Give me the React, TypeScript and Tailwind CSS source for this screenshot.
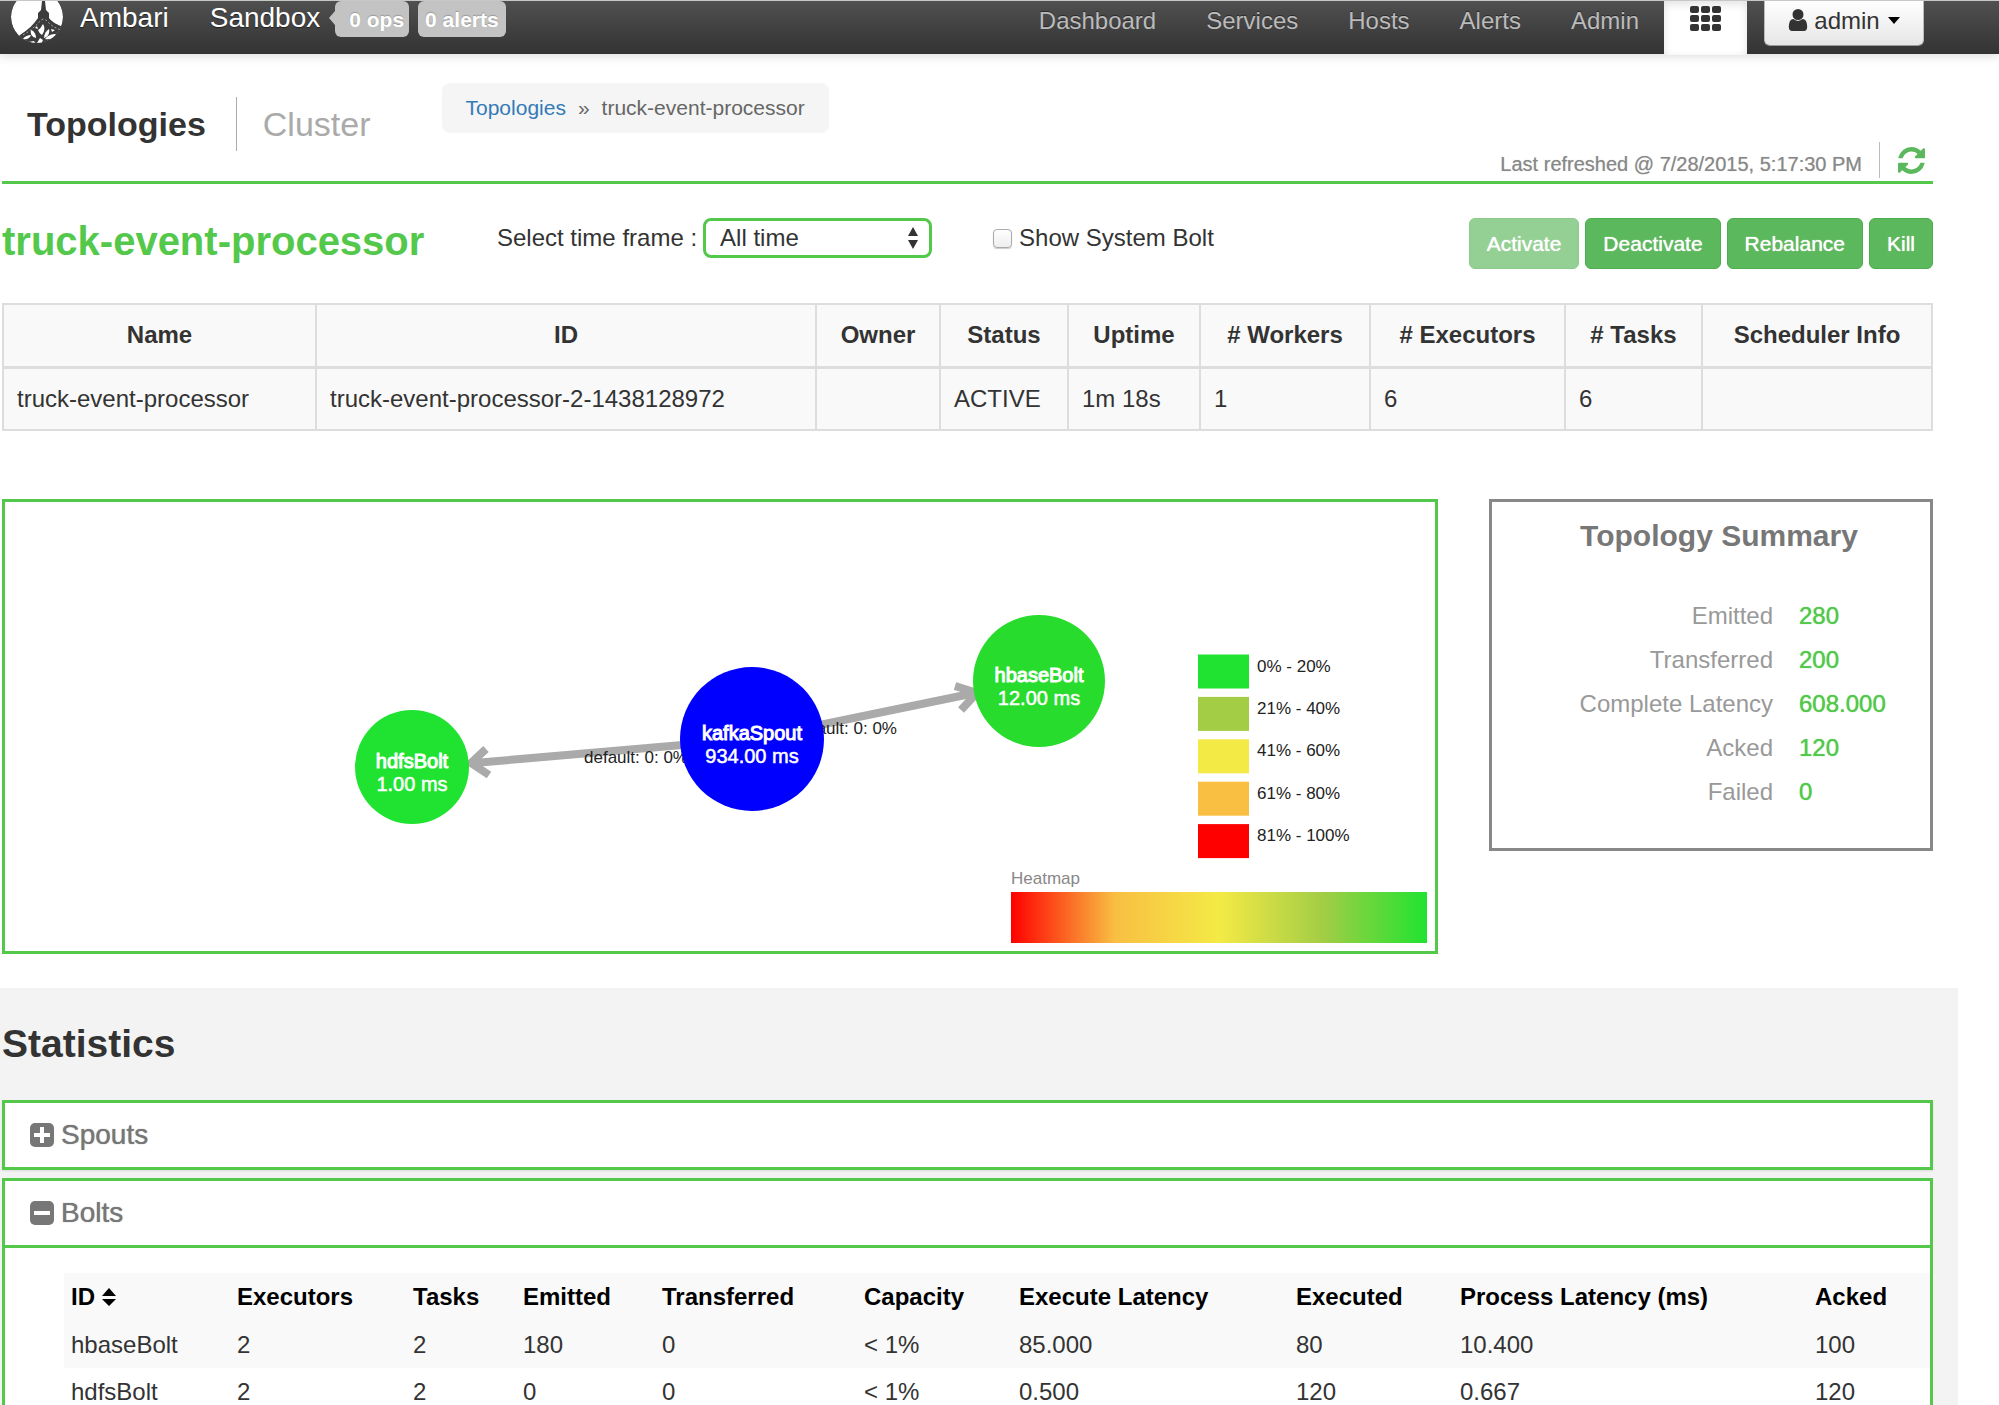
import type { ReactNode } from "react";

const GREEN = "#20e331";

const navLinks = ["Dashboard", "Services", "Hosts", "Alerts", "Admin"];

const topologyColumns: { label: string; value: string; width: string }[] = [
  { label: "Name", value: "truck-event-processor", width: "w-[313px]" },
  { label: "ID", value: "truck-event-processor-2-1438128972", width: "w-[500px]" },
  { label: "Owner", value: "", width: "w-[124px]" },
  { label: "Status", value: "ACTIVE", width: "w-[128px]" },
  { label: "Uptime", value: "1m 18s", width: "w-[132px]" },
  { label: "# Workers", value: "1", width: "w-[170px]" },
  { label: "# Executors", value: "6", width: "w-[195px]" },
  { label: "# Tasks", value: "6", width: "w-[137px]" },
  { label: "Scheduler Info", value: "", width: "w-auto" },
];

const summary = [
  ["Emitted", "280"],
  ["Transferred", "200"],
  ["Complete Latency", "608.000"],
  ["Acked", "120"],
  ["Failed", "0"],
];

const boltColumns: { label: string; width: string }[] = [
  { label: "ID", width: "w-[166px]" },
  { label: "Executors", width: "w-[176px]" },
  { label: "Tasks", width: "w-[110px]" },
  { label: "Emitted", width: "w-[139px]" },
  { label: "Transferred", width: "w-[202px]" },
  { label: "Capacity", width: "w-[155px]" },
  { label: "Execute Latency", width: "w-[277px]" },
  { label: "Executed", width: "w-[164px]" },
  { label: "Process Latency (ms)", width: "w-[355px]" },
  { label: "Acked", width: "w-auto" },
];

const boltRows = [
  ["hbaseBolt", "2", "2", "180", "0", "< 1%", "85.000", "80", "10.400", "100"],
  ["hdfsBolt", "2", "2", "0", "0", "< 1%", "0.500", "120", "0.667", "120"],
];

const legend = [
  { color: GREEN, label: "0% - 20%" },
  { color: "#a3cd45", label: "21% - 40%" },
  { color: "#f4ea45", label: "41% - 60%" },
  { color: "#f8bf43", label: "61% - 80%" },
  { color: "#ff0000", label: "81% - 100%" },
];

const nodes = [
  { name: "hdfsBolt", time: "1.00 ms", x: 412, y: 768, r: 57, fill: GREEN },
  { name: "kafkaSpout", time: "934.00 ms", x: 752, y: 740, r: 72, fill: "#0000ff" },
  { name: "hbaseBolt", time: "12.00 ms", x: 1039, y: 682, r: 66, fill: "#27dc2c" },
];

function Logo() {
  return (
    <svg viewBox="0 0 52 43" className="h-[43px] w-[52px]" aria-hidden="true">
      <defs>
        <clipPath id="logo-disc">
          <circle cx="26" cy="16" r="26" />
        </clipPath>
      </defs>
      <g clipPath="url(#logo-disc)">
        <circle cx="26" cy="16" r="26" fill="#fff" />
        <path
          d="M31 0h3l1 9 3 3v5c4 5 9 7 15 9v20H7V36l2-2c8-5 14-11 18-17v-5l3-3z"
          fill="#3c3c3c"
        />
        <path
          d="M12 34c7-4 13-9 18-15 1-1 4-1 5 0 4 5 9 8 15 10"
          fill="none"
          stroke="#aaa"
          strokeWidth="1"
          strokeDasharray="2 2"
        />
        <g fill="#fff">
          <path d="M12 38c2-3 5-4 8-4-1 3-4 5-8 4z" />
          <path d="M20 29c3 1 5 4 5 8-4-1-6-4-5-8z" />
          <path d="M27 29c3-2 3-3 5-6 2 3 2 7-1 11-2-1-3-3-4-5z" />
          <path d="M38 28c1 4-1 8-5 9 0-4 2-7 5-9z" />
          <path d="M34 38c3-4 7-5 11-5-2 4-6 6-11 5z" />
          <path d="M26 42l3-5 3 2-2 4z" />
          <path d="M18 41l5-1 1 2-5 1z" />
          <path d="M40 28l4 1-3 2z" />
          <path d="M24 27l2-2 1 3z" />
        </g>
      </g>
    </svg>
  );
}

function GridIcon() {
  return (
    <svg viewBox="0 0 32 25" className="h-[25px] w-8" fill="#333">
      {[0, 9, 18].map((y) =>
        [0, 11, 22].map((x) => (
          <rect key={`${x}-${y}`} x={x} y={y} width="9" height="7" rx="2" />
        )),
      )}
    </svg>
  );
}

function UserIcon() {
  return (
    <svg viewBox="256 128 1280 1536" className="h-[22px] w-5" fill="#333" aria-hidden="true">
      <path d="M1536 1399q0 109-62.5 187t-150.5 78h-854q-88 0-150.5-78t-62.5-187q0-85 8.5-160.5t31.5-152 58.5-131 94-89 134.5-34.5q131 128 313 128t313-128q76 0 134.5 34.5t94 89 58.5 131 31.5 152 8.5 160.5zm-256-887q0 159-112.5 271.5t-271.5 112.5-271.5-112.5-112.5-271.5 112.5-271.5 271.5-112.5 271.5 112.5 112.5 271.5z" />
    </svg>
  );
}

function RefreshIcon() {
  return (
    <svg viewBox="0 128 1536 1536" className="size-[27px]" fill="#5cb85c" aria-hidden="true">
      <path d="M1511 1056q0 5-1 7-64 268-268 434.5t-478 166.5q-146 0-282.5-55t-243.5-157l-129 129q-19 19-45 19t-45-19-19-45v-448q0-26 19-45t45-19h448q26 0 45 19t19 45-19 45l-137 137q71 66 161 102t187 36q134 0 250-65t186-179q11-17 53-117 8-23 30-23h192q13 0 22.5 9.5t9.5 22.5zm25-800v448q0 26-19 45t-45 19h-448q-26 0-45-19t-19-45 19-45l138-138q-148-137-349-137-134 0-250 65t-186 179q-11 17-53 117-8 23-30 23h-199q-13 0-22.5-9.5t-9.5-22.5v-7q65-268 270-434.5t480-166.5q146 0 284 55.5t245 156.5l130-129q19-19 45-19t45 19 19 45z" />
    </svg>
  );
}

function SquareToggleIcon({ open }: { open: boolean }) {
  return (
    <svg viewBox="0 0 24 24" className="size-6" aria-hidden="true">
      <rect width="24" height="24" rx="5" fill="#777" />
      <path d={open ? "M4 12h16" : "M4 12h16M12 4v16"} stroke="#fff" strokeWidth="4" />
    </svg>
  );
}

function Navbar() {
  return (
    <header className="relative z-10 flex h-[54px] items-start justify-between border-t border-[#c4c9c6] bg-linear-to-b from-[#505050] to-[#333] pr-[75px] pl-[11px] shadow-[0_2px_10px_rgba(0,0,0,0.15)]">
      <div className="flex items-start text-[28px] leading-[34px] text-white [text-shadow:0_1px_1px_#222]">
        <Logo />
        <a href="#ambari" className="ml-[17px]">Ambari</a>
        <a href="#sandbox" className="ml-[41px]">Sandbox</a>
        <a href="#ops" className="ml-[9px] flex items-start text-[21px] font-bold">
          <span className="mt-[10px] border-y-[7px] border-r-[6px] border-y-transparent border-r-[#c3c3c3]" />
          <span className="rounded-md bg-[#c3c3c3] pt-[2px] pr-[5px] pl-[14px] leading-[34px] [text-shadow:0_-1px_1px_#999]">0 ops</span>
        </a>
        <a href="#alerts-count" className="ml-[9px] rounded-md bg-[#c3c3c3] px-[7px] pt-[2px] text-[21px] leading-[34px] font-bold [text-shadow:0_-1px_1px_#999]">
          0 alerts
        </a>
      </div>
      <nav className="flex items-start text-2xl leading-10 text-[#bbb]">
        {navLinks.map((label) => (
          <a key={label} href={`#${label.toLowerCase()}`} className="px-[25px] [text-shadow:0_-1px_0_#2a2a2a]">
            {label}
          </a>
        ))}
        <button type="button" aria-label="Views" className="flex h-[54px] w-[83px] justify-center bg-white pt-[5px] shadow-[inset_0_3px_8px_rgba(0,0,0,0.12)]">
          <GridIcon />
        </button>
        <button
          type="button"
          className="ml-[17px] flex h-[45px] w-[160px] items-start justify-center rounded-b-md border border-t-0 border-[#bbb] border-b-[#999] bg-linear-to-b from-white to-[#e6e6e6] text-[#333]"
        >
          <span className="mt-2 mr-[6px]"><UserIcon /></span>
          admin
          <span className="mt-4 ml-2 border-x-[6px] border-t-[7px] border-x-transparent border-t-black" />
        </button>
      </nav>
    </header>
  );
}

function PageHeader() {
  return (
    <div className="flex h-[130px] items-start border-b-[3px] border-[#53c84b]">
      <div className="mt-[43px] flex h-[54px] items-center text-[34px]">
        <a href="#topologies" className="ml-[25px] font-bold text-[#333]">Topologies</a>
        <span className="mr-[26px] ml-[30px] h-full w-px bg-[#aaa]" />
        <a href="#cluster" className="text-[#aaa]">Cluster</a>
      </div>
      <div className="mt-[29px] ml-[71px] flex h-[50px] items-center gap-3 rounded-lg bg-[#f5f5f5] px-6 text-[21px] text-[#666]">
        <a href="#topologies" className="text-[#337ab7]">Topologies</a>
        <span>»</span>
        <span>truck-event-processor</span>
      </div>
      <div className="mb-[3px] ml-auto flex h-9 items-end self-end pr-2 text-xl leading-7 text-[#888] [text-shadow:0_0_1px_#bbb]">
        <span>Last refreshed @ 7/28/2015, 5:17:30 PM</span>
        <span className="mr-[18px] ml-[17px] h-full w-px bg-[#bbb]" />
        <button type="button" aria-label="Refresh" className="flex h-full items-center">
          <RefreshIcon />
        </button>
      </div>
    </div>
  );
}

function ActionButton({ children, disabled }: { children: ReactNode; disabled?: boolean }) {
  return (
    <button
      type="button"
      disabled={disabled}
      className="h-[51px] rounded-md border border-[#4cae4c] bg-[#5cb85c] px-[17px] text-[21px] text-white [text-shadow:0_0_1px_#fff] disabled:opacity-65"
    >
      {children}
    </button>
  );
}

function Toolbar() {
  return (
    <div className="mt-[34px] flex items-start text-2xl text-[#333]">
      <h1 className="w-[495px] shrink-0 text-[40px] leading-[46px] font-bold text-[#53c84b]">
        truck-event-processor
      </h1>
      <div className="flex h-10 items-center">
        <label htmlFor="time-frame">Select time frame :</label>
        <span className="relative ml-[6px]">
          <select
            id="time-frame"
            className="block h-10 w-[229px] appearance-none rounded-lg border-[3px] border-[#53c84b] bg-white pl-[14px] leading-8 outline-none"
          >
            <option>All time</option>
          </select>
          <svg viewBox="0 0 10 22" className="pointer-events-none absolute top-[9px] right-[14px] h-[22px] w-[10px]" fill="#333">
            <path d="M5 0l5 9H0zM5 22l5-9H0z" />
          </svg>
        </span>
        <input
          id="system-bolt"
          type="checkbox"
          className="ml-[61px] size-[19px] appearance-none rounded-[4px] border border-[#aaa] bg-linear-to-b from-white to-[#eee] shadow-[0_1px_1px_#ccc]"
        />
        <label htmlFor="system-bolt" className="ml-[7px]">Show System Bolt</label>
      </div>
      <div className="ml-auto flex gap-[6px]">
        <ActionButton disabled>Activate</ActionButton>
        <ActionButton>Deactivate</ActionButton>
        <ActionButton>Rebalance</ActionButton>
        <ActionButton>Kill</ActionButton>
      </div>
    </div>
  );
}

function TopologyTable() {
  return (
    <table className="mt-[34px] w-full table-fixed border-collapse border-2 border-[#ddd] bg-[#f9f9f9] text-2xl text-[#333]">
      <thead>
        <tr className="h-[63px] border-b-[3px] border-[#ddd]">
          {topologyColumns.map((c) => (
            <th key={c.label} scope="col" className={`${c.width} border-r-2 border-[#ddd] text-center`}>
              {c.label}
            </th>
          ))}
        </tr>
      </thead>
      <tbody>
        <tr className="h-[63px]">
          {topologyColumns.map((c) => (
            <td key={c.label} className="border-r-2 border-[#ddd] pl-[13px]">
              {c.value}
            </td>
          ))}
        </tr>
      </tbody>
    </table>
  );
}

function TopologyGraph() {
  return (
    <div className="flex-1 border-[3px] border-[#53c84b]">
      <svg viewBox="5 503 1430 449" className="block w-full" fontFamily='"Liberation Sans", Arial, sans-serif'>
        <defs>
          <linearGradient id="heat">
            <stop offset="0" stopColor="#ff0000" />
            <stop offset="0.25" stopColor="#f8bf43" />
            <stop offset="0.5" stopColor="#f4ea45" />
            <stop offset="0.75" stopColor="#a3cd45" />
            <stop offset="1" stopColor={GREEN} />
          </linearGradient>
        </defs>
        <g fill="none" stroke="#aaa" strokeWidth="8">
          <path d="M752 740L474 764" />
          <path d="M486 750L471 764L489 776" />
          <path d="M752 740L975 694" />
          <path d="M955 687L977 694L961 711" />
        </g>
        <g fontSize="17" fill="#222">
          <text x="584" y="764">default: 0: 0%</text>
          <text x="793" y="735">default: 0: 0%</text>
        </g>
        {nodes.map((n) => (
          <g key={n.name} fill="#fff" stroke="#fff" fontSize="20" textAnchor="middle">
            <circle cx={n.x} cy={n.y} r={n.r} fill={n.fill} stroke="none" />
            <text x={n.x} y={n.y + 1} strokeWidth="1">{n.name}</text>
            <text x={n.x} y={n.y + 24} strokeWidth="0.5">{n.time}</text>
          </g>
        ))}
        <g fontSize="17" fill="#222">
          {legend.map((l, i) => (
            <g key={l.label}>
              <rect x="1198" y={655.5 + i * 42.4} width="51" height="34" fill={l.color} />
              <text x="1257" y={672.5 + i * 42.4}>{l.label}</text>
            </g>
          ))}
        </g>
        <text x="1011" y="885" fontSize="17" fill="#888">Heatmap</text>
        <rect x="1011" y="893" width="416" height="51" fill="url(#heat)" />
      </svg>
    </div>
  );
}

function TopologySummary() {
  return (
    <section className="h-[352px] w-[444px] shrink-0 border-[3px] border-[#888] pt-[18px] text-2xl">
      <h2 className="pl-4 text-center text-3xl leading-8 font-bold text-[#777]">Topology Summary</h2>
      <dl className="mt-[42px] leading-11">
        {summary.map(([label, value]) => (
          <div key={label} className="flex gap-[26px]">
            <dt className="w-[281px] text-right text-[#999]">{label}</dt>
            <dd className="text-[#53c84b] [text-shadow:0_0_1px_#53c84b]">{value}</dd>
          </div>
        ))}
      </dl>
    </section>
  );
}

function PanelHeading({ open, children }: { open: boolean; children: ReactNode }) {
  return (
    <button type="button" aria-expanded={open} className="flex h-16 w-full items-center gap-[7px] bg-white pl-[25px] text-[28px] text-[#777] [text-shadow:0_0_1px_#777]">
      <SquareToggleIcon open={open} />
      {children}
    </button>
  );
}

function Statistics() {
  return (
    <section className="mt-[34px] mr-[41px] bg-[#f3f3f3] pr-[25px] pl-[2px]">
      <h2 className="flex h-28 items-center text-[39px] font-bold text-[#333]">Statistics</h2>
      <div className="mb-2 border-[3px] border-[#53c84b] shadow-[0_1px_2px_rgba(0,0,0,0.1)]">
        <PanelHeading open={false}>Spouts</PanelHeading>
      </div>
      <div className="border-[3px] border-[#53c84b] bg-white">
        <PanelHeading open>Bolts</PanelHeading>
        <div className="border-t-[3px] border-[#53c84b] pt-[25px] pb-6 pl-[59px]">
          <table className="w-full table-fixed text-left text-2xl leading-6 text-[#333]">
            <thead>
              <tr className="h-12 bg-[#f9f9f9] text-black">
                {boltColumns.map((c, i) => (
                  <th key={c.label} scope="col" className={`${c.width} pl-[7px] whitespace-nowrap`}>
                    {i === 0 ? (
                      <button type="button" className="flex items-center gap-[7px] leading-6 font-bold">
                        ID
                        <svg viewBox="0 0 14 18" className="h-[18px] w-[14px]" aria-hidden="true">
                          <path d="M7 0l7 8H0zM7 18l7-7H0z" />
                        </svg>
                      </button>
                    ) : (
                      c.label
                    )}
                  </th>
                ))}
              </tr>
            </thead>
            <tbody>
              {boltRows.map((row) => (
                <tr key={row[0]} className="h-[47px] odd:bg-[#f9f9f9]">
                  {row.map((cell, i) => (
                    <td key={boltColumns[i].label} className="pl-[7px]">{cell}</td>
                  ))}
                </tr>
              ))}
            </tbody>
          </table>
        </div>
      </div>
    </section>
  );
}

export default function App() {
  return (
    <div className='h-screen overflow-hidden bg-white font-["Liberation_Sans",Arial,sans-serif]'>
      <Navbar />
      <main>
        <div className="pr-[66px] pl-[2px]">
          <PageHeader />
          <Toolbar />
          <TopologyTable />
          <div className="mt-[68px] flex items-start gap-[51px]">
            <TopologyGraph />
            <TopologySummary />
          </div>
        </div>
        <Statistics />
      </main>
    </div>
  );
}
